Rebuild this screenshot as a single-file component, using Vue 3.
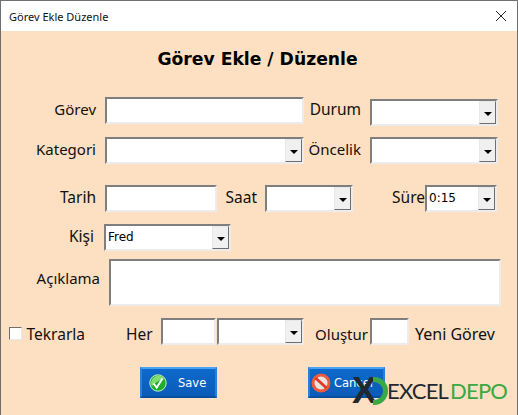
<template>
  <div class="window">
    <div class="titlebar">
      <span class="title-text">Görev Ekle Düzenle</span>
      <svg class="close" width="12" height="12" viewBox="0 0 12 12"><path d="M1 1l10 10M11 1L1 11" stroke="#222" stroke-width="1" fill="none" /></svg>
    </div>

    <div class="form">
      <h1 class="heading">Görev Ekle / Düzenle</h1>

      <div class="row row-gorev">
        <label class="label narrow col-left">Görev</label>
        <div class="input w-main"></div>
        <label class="label col-mid">Durum</label>
        <div class="input combo w-right"><span class="drop"><i></i></span></div>
      </div>

      <div class="row row-kategori">
        <label class="label narrow col-left">Kategori</label>
        <div class="input combo w-main"><span class="drop"><i></i></span></div>
        <label class="label narrow col-mid">Öncelik</label>
        <div class="input combo w-right"><span class="drop"><i></i></span></div>
      </div>

      <div class="row row-tarih">
        <label class="label col-left">Tarih</label>
        <div class="input w-tarih"></div>
        <label class="label saat">Saat</label>
        <div class="input combo w-saat"><span class="drop"><i></i></span></div>
        <label class="label sure">Süre</label>
        <div class="input combo w-sure"><span class="value">0:15</span><span class="drop"><i></i></span></div>
      </div>

      <div class="row row-kisi">
        <label class="label col-kisi">Kişi</label>
        <div class="input combo w-kisi"><span class="value">Fred</span><span class="drop"><i></i></span></div>
      </div>

      <div class="row row-aciklama">
        <label class="label narrow col-aciklama">Açıklama</label>
        <div class="input w-aciklama"></div>
      </div>

      <div class="row row-tekrar">
        <span class="check"></span>
        <label class="label tekrarla">Tekrarla</label>
        <label class="label her">Her</label>
        <div class="input w-her"></div>
        <div class="input combo w-period"><span class="drop"><i></i></span></div>
        <label class="label narrow olustur">Oluştur</label>
        <div class="input w-adet"></div>
        <label class="label yeni">Yeni Görev</label>
      </div>

      <div class="buttons">
        <button class="btn save">
          <svg width="18" height="18" viewBox="0 0 18 18">
            <circle cx="9" cy="9" r="8.2" fill="#1fae2a" stroke="#c9f2c0" stroke-width="1" />
            <path d="M9 1.5a7.5 7.5 0 0 1 6.5 3.8C11 6 6 8 3 12.5A7.5 7.5 0 0 1 9 1.5z" fill="#7fdc6f" />
            <path d="M4.5 9.5l3.2 4L13.5 4.5" stroke="#fff" stroke-width="2" fill="none" />
          </svg>
          <span>Save</span>
        </button>
        <button class="btn cancel">
          <svg width="20" height="20" viewBox="0 0 20 20">
            <circle cx="10" cy="10" r="8" fill="#e9e4e0" stroke="#ef5a3a" stroke-width="3" />
            <path d="M4.5 5l11 10" stroke="#e0392b" stroke-width="3" />
          </svg>
          <span>Cancel</span>
        </button>
      </div>

      <div class="logo">
        <span class="logo-x">X</span>
        <svg class="logo-arc" width="15" height="28" viewBox="0 0 15 28"><path d="M0 2.5h1a11.5 11.5 0 0 1 0 23H0" fill="none" stroke="#3aa844" stroke-width="5" /></svg>
        <span class="logo-excel">EXCEL</span><span class="logo-depo">DEPO</span>
      </div>
    </div>
  </div>
</template>

<script setup>
</script>

<style scoped>
.window {
  width: 518px;
  height: 415px;
  box-sizing: border-box;
  border: 1px solid #6f6f6f;
  border-bottom: none;
  background: #fddfc1;
  font-family: "Noto Sans", "DejaVu Sans", sans-serif;
  color: #000;
  overflow: hidden;
}
.titlebar {
  height: 30px;
  background: #fff;
  display: flex;
  align-items: center;
  justify-content: space-between;
  padding: 0 10px 0 8px;
}
.title-text { font-size: 11px; color: #111; }
.form { position: relative; padding-top: 16px; }
.heading {
  margin: 0;
  font-family: "DejaVu Sans", sans-serif;
  font-size: 17.2px;
  font-weight: 700;
  line-height: 24px;
  text-align: center;
  padding-right: 3px;
}
.row { display: flex; align-items: center; }
.row-gorev { margin-top: 25px; height: 29px; }
.row-kategori { margin-top: 12px; height: 27px; }
.row-tarih { margin-top: 21px; height: 27px; }
.row-kisi { margin-top: 12px; height: 27px; }
.row-aciklama { margin-top: 8px; height: 47px; align-items: flex-start; }
.row-tekrar { margin-top: 12px; height: 27px; }
.label {
  font-size: 15.5px;
  line-height: 20px;
  white-space: nowrap;
  color: #111;
  display: flex;
  justify-content: flex-end;
  padding-bottom: 4px;
}
.label.narrow { font-size: 15px; }
.input {
  box-sizing: border-box;
  height: 27px;
  background: #fff;
  border: 2px solid;
  border-color: #7f7f7f #ececec #ececec #7f7f7f;
  position: relative;
  flex: none;
}
.combo { display: flex; align-items: stretch; justify-content: flex-end; }
.value {
  flex: 1;
  font-family: "DejaVu Sans", sans-serif;
  font-size: 12px;
  line-height: 23px;
  padding-left: 2px;
}
.drop {
  width: 17px;
  flex: none;
  box-sizing: border-box;
  background: #f0f0f0;
  border: 1px solid;
  border-color: #e8e8e8 #6e6e6e #6e6e6e #e8e8e8;
  display: flex;
  align-items: center;
  justify-content: center;
}
.drop i {
  width: 0;
  height: 0;
  margin-top: 3px;
  border-left: 4px solid transparent;
  border-right: 4px solid transparent;
  border-top: 4px solid #000;
}
.col-left { width: 95px; margin-right: 9px; }
.col-mid { width: 50px; margin: 0 9px 0 7px; }
.w-main { width: 199px; }
.w-right { width: 128px; }
.row-gorev .w-right { margin-top: 3px; }
.w-tarih { width: 112px; }
.saat { margin-left: 9px; width: 31px; }
.w-saat { width: 88px; margin-left: 8px; }
.sure { margin-left: 39px; width: 33px; }
.w-sure { width: 72px; }
.col-kisi { width: 93px; margin-right: 10px; }
.w-kisi { width: 127px; }
.col-aciklama { width: 99px; margin: 9px 9px 0 0; padding-bottom: 0; }
.w-aciklama { width: 392px; height: 47px; }
.check {
  box-sizing: border-box;
  width: 13px;
  height: 13px;
  margin: 3px 0 0 8px;
  background: #fff;
  border: 1px solid;
  border-color: #6f6f6f #e8e8e8 #e8e8e8 #6f6f6f;
}
.tekrarla { margin: 5px 0 0 4px; width: 59px; padding-bottom: 0; }
.her { margin: 4px 0 0 41px; width: 26px; padding-bottom: 0; justify-content: flex-start; }
.w-her { width: 55px; margin-left: 9px; }
.w-period { width: 87px; margin-left: 1px; }
.olustur { margin: 4px 0 0 11px; width: 53px; padding-bottom: 0; }
.w-adet { width: 39px; margin-left: 2px; }
.yeni { margin: 4px 0 0 6px; font-size: 16px; padding-bottom: 0; }
.buttons { display: flex; margin: 22px 0 0 139px; gap: 91px; }
.btn {
  width: 77px;
  height: 31px;
  box-sizing: border-box;
  display: flex;
  align-items: center;
  padding: 0 0 0 7px;
  color: #fff;
  font-family: "DejaVu Sans", sans-serif;
  font-size: 11.5px;
  background: linear-gradient(#0d69cc, #0a5cb8);
  border: 2px solid;
  border-color: #4aa3f2 #2a7fdc #0a4f9e #2a7fdc;
}
.save span { margin-left: 11px; }
.cancel { padding-left: 1px; }
.cancel span { margin-left: 3px; }
.logo {
  position: absolute;
  left: 351px;
  top: 341px;
  height: 38px;
  display: flex;
  align-items: center;
}
.logo-x {
  font-family: "Liberation Sans", sans-serif;
  font-weight: 700;
  font-size: 37px;
  line-height: 38px;
  color: #1f2a30;
  width: 24px;
}
.logo-arc { margin-left: -3px; }
.logo-excel, .logo-depo {
  font-family: "Lato", sans-serif;
  font-size: 22px;
  line-height: 30px;
  letter-spacing: -0.8px;
}
.logo-excel { color: #1f2a30; margin-left: -1px; }
.logo-depo { color: #3aa844; margin-left: 2px; }
.close { display: block; }
</style>

<style>
html, body { margin: 0; padding: 0; }
</style>
